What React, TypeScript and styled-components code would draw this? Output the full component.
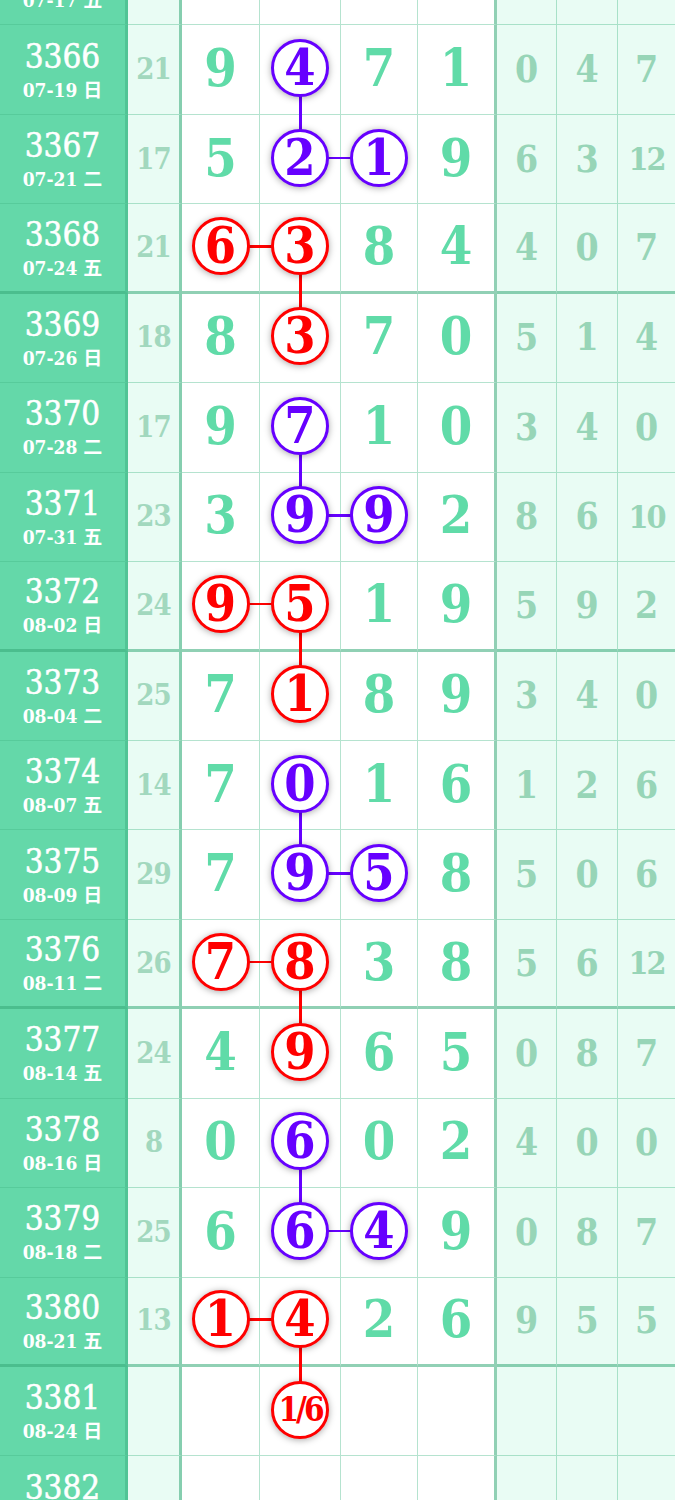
import React from 'react';
import styled, { createGlobalStyle } from 'styled-components';

const GlobalStyle = createGlobalStyle`
  html, body {
    margin: 0;
    padding: 0;
    background: #fff;
  }
  body {
    overflow: hidden;
  }
`;

const SERIF = `"DejaVu Serif", "Liberation Serif", "Noto Sans CJK SC", serif`;
const THIN = 'rgba(70, 185, 135, 0.4)';
const THICK = 'rgba(55, 170, 120, 0.55)';
const TONES = { r: '#ff0000', p: '#6600ff' };

type Tone = 'r' | 'p';

const Viewport = styled.div`
  width: 675px;
  height: 1500px;
  overflow: hidden;
  font-family: ${SERIF};
  font-stretch: condensed;
`;

// the page is scrolled a little: row 3365 is cut at the top
const Chart = styled.div`
  margin-top: -64px;
`;

const Row = styled.div`
  display: grid;
  grid-template-columns: 128px 54px 78px 81px 77px 79px 60px 61px 57px;
  height: 89.44px;
`;

const Cell = styled.div<{ $thick?: boolean }>`
  box-sizing: border-box;
  display: flex;
  align-items: center;
  justify-content: center;
  border-bottom: ${p => (p.$thick ? `3px solid ${THICK}` : `1px solid ${THIN}`)};
  font-weight: bold;
  line-height: 1;
`;

const IssueCell = styled(Cell)`
  flex-direction: column;
  background: #64d8a9;
  border-right: 3px solid rgba(40, 150, 105, 0.3);
  color: #fff;
`;

const IssueNo = styled.div`
  font-size: 33px;
  font-weight: normal;
  line-height: 35px;
  -webkit-text-stroke: 0.5px #fff;
`;

const IssueDate = styled.div`
  margin-top: 6px;
  font-size: 19px;
  line-height: 21px;
  white-space: nowrap;
`;

const SumCell = styled(Cell)`
  background: #e9fcf4;
  border-right: 3px solid ${THICK};
  color: #a2d8be;
  font-size: 29px;
  letter-spacing: -1px;
`;

const MainCell = styled(Cell)<{ $edge?: boolean }>`
  padding-bottom: 3px;
  background: #fff;
  border-right: ${p => (p.$edge ? `3px solid ${THICK}` : `1px solid ${THIN}`)};
  color: #60dba8;
  font-size: 52px;
`;

const TailCell = styled(Cell)<{ $last?: boolean; $wide?: boolean }>`
  background: #e9fcf4;
  border-right: ${p => (p.$last ? 'none' : `1px solid ${THIN}`)};
  color: #97d5b7;
  font-size: ${p => (p.$wide ? 32 : 37)}px;
  letter-spacing: ${p => (p.$wide ? '-2px' : '0')};
`;

const Node = styled.div`
  position: relative;
  width: 58px;
  height: 58px;
`;

const Ball = styled.div<{ $tone: Tone; $small?: boolean }>`
  position: relative;
  z-index: 2;
  box-sizing: border-box;
  width: 58px;
  height: 58px;
  display: flex;
  align-items: center;
  justify-content: center;
  border: 3px solid ${p => TONES[p.$tone]};
  border-radius: 50%;
  background: #fff;
  box-shadow: 0 1px 7px rgba(0, 0, 0, 0.35);
  color: ${p => TONES[p.$tone]};
  font-size: ${p => (p.$small ? 33 : 50)}px;
  letter-spacing: ${p => (p.$small ? '-3px' : '0')};
`;

const DownLink = styled.span<{ $tone: Tone }>`
  position: absolute;
  z-index: 1;
  left: calc(50% - 1px);
  top: 50%;
  width: 2.5px;
  height: 90px;
  background: ${p => TONES[p.$tone]};
`;

const RightLink = styled.span<{ $tone: Tone }>`
  position: absolute;
  z-index: 1;
  top: calc(50% - 1px);
  left: 50%;
  width: 80px;
  height: 2.5px;
  background: ${p => TONES[p.$tone]};
`;

type Mark = { text: string; tone?: Tone; down?: boolean; right?: boolean };

// "R6>" red ball linked right, "P4|" purple ball linked down, "_" empty
const parse = (s: string): Mark[] =>
  s.split(' ').map(t => {
    if (t === '_') return { text: '' };
    const m = t.match(/^([RP]?)([\d/]+)([|>]?)$/);
    if (!m) return { text: t };
    return {
      text: m[2],
      tone: m[1] ? (m[1].toLowerCase() as Tone) : undefined,
      down: m[3] === '|',
      right: m[3] === '>',
    };
  });

const rows = [
  { no: '3365', date: '07-17 五', sum: '', main: '_ _ _ _', tail: '_ _ _' },
  { no: '3366', date: '07-19 日', sum: '21', main: '9 P4| 7 1', tail: '0 4 7' },
  { no: '3367', date: '07-21 二', sum: '17', main: '5 P2> P1 9', tail: '6 3 12' },
  { no: '3368', date: '07-24 五', sum: '21', main: 'R6> R3| 8 4', tail: '4 0 7' },
  { no: '3369', date: '07-26 日', sum: '18', main: '8 R3 7 0', tail: '5 1 4' },
  { no: '3370', date: '07-28 二', sum: '17', main: '9 P7| 1 0', tail: '3 4 0' },
  { no: '3371', date: '07-31 五', sum: '23', main: '3 P9> P9 2', tail: '8 6 10' },
  { no: '3372', date: '08-02 日', sum: '24', main: 'R9> R5| 1 9', tail: '5 9 2' },
  { no: '3373', date: '08-04 二', sum: '25', main: '7 R1 8 9', tail: '3 4 0' },
  { no: '3374', date: '08-07 五', sum: '14', main: '7 P0| 1 6', tail: '1 2 6' },
  { no: '3375', date: '08-09 日', sum: '29', main: '7 P9> P5 8', tail: '5 0 6' },
  { no: '3376', date: '08-11 二', sum: '26', main: 'R7> R8| 3 8', tail: '5 6 12' },
  { no: '3377', date: '08-14 五', sum: '24', main: '4 R9 6 5', tail: '0 8 7' },
  { no: '3378', date: '08-16 日', sum: '8', main: '0 P6| 0 2', tail: '4 0 0' },
  { no: '3379', date: '08-18 二', sum: '25', main: '6 P6> P4 9', tail: '0 8 7' },
  { no: '3380', date: '08-21 五', sum: '13', main: 'R1> R4| 2 6', tail: '9 5 5' },
  { no: '3381', date: '08-24 日', sum: '', main: '_ R1/6 _ _', tail: '_ _ _' },
  { no: '3382', date: '08-26 二', sum: '', main: '_ _ _ _', tail: '_ _ _' },
];

const App = () => {
  return (
    <>
      <GlobalStyle />
      <Viewport>
        <Chart>
          {rows.map(r => {
            const thick = (Number(r.no) - 3368) % 4 === 0;
            const tail = r.tail.split(' ');
            return (
              <Row key={r.no}>
                <IssueCell $thick={thick}>
                  <IssueNo>{r.no}</IssueNo>
                  <IssueDate>{r.date}</IssueDate>
                </IssueCell>
                <SumCell $thick={thick}>{r.sum}</SumCell>
                {parse(r.main).map((m, i) => (
                  <MainCell key={i} $thick={thick} $edge={i === 3}>
                    {m.tone ? (
                      <Node>
                        {m.down && <DownLink $tone={m.tone} />}
                        {m.right && <RightLink $tone={m.tone} />}
                        <Ball $tone={m.tone} $small={m.text.length > 1}>
                          {m.text}
                        </Ball>
                      </Node>
                    ) : (
                      m.text
                    )}
                  </MainCell>
                ))}
                {tail.map((t, i) => (
                  <TailCell key={i} $thick={thick} $last={i === 2} $wide={t.length > 1}>
                    {t === '_' ? '' : t}
                  </TailCell>
                ))}
              </Row>
            );
          })}
        </Chart>
      </Viewport>
    </>
  );
};

export default App;
